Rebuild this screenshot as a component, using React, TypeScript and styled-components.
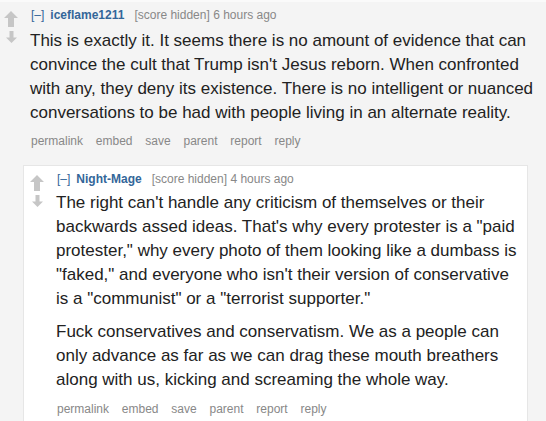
import React from "react";
import styled, { createGlobalStyle } from "styled-components";

const Global = createGlobalStyle`
  html, body { margin: 0; padding: 0; background: #f4f4f4; }
  body { font-family: "Liberation Sans", Arial, sans-serif; }
`;

const Page = styled.div`
  border-top: 2px solid #fafafa;
  min-height: 419px;
  overflow: hidden;
`;

const CommentBox = styled.div<{ $nested?: boolean }>`
  background: ${(p) => (p.$nested ? "#ffffff" : "transparent")};
  border: ${(p) => (p.$nested ? "1px solid #e6e6e6" : "none")};
  padding: ${(p) => (p.$nested ? "5px 8px 12px 2px" : "5px 6px 0 0")};
`;

const Row = styled.div`
  display: grid;
  grid-template-columns: 30px 1fr;
`;

const Arrows = styled.div`
  display: flex;
  flex-direction: column;
  padding-top: 4px;
  padding-left: 4px;
`;

const UpArrow = styled.svg`
  display: block;
  width: 14px;
  height: 16px;
`;

const DownArrow = styled.svg`
  display: block;
  width: 11px;
  height: 12px;
  margin-top: 4px;
  margin-left: 2px;
`;

const Entry = styled.div`
  min-width: 0;
`;

const Tagline = styled.div`
  font-size: 12px;
  line-height: 16px;
  color: #888888;
  display: flex;
  align-items: baseline;
  white-space: nowrap;
`;

const Expand = styled.span`
  color: #336699;
  margin-right: 6px;
  margin-left: 1px;
`;

const Author = styled.span`
  color: #336699;
  font-weight: bold;
  margin-right: 10px;
`;

const Body = styled.div<{ $top: number }>`
  margin-top: ${(p) => p.$top}px;
  font-size: 17px;
  line-height: 24px;
  color: #222222;
`;

const Para = styled.p`
  margin: 0 0 9px 0;
  &:last-child { margin-bottom: 0; }
`;

const Actions = styled.ul<{ $top: number }>`
  list-style: none;
  margin: ${(p) => p.$top}px 0 0 1px;
  padding: 0;
  display: flex;
  gap: 12.8px;
  font-size: 12px;
  line-height: 16px;
  color: #888888;
`;

const Action = styled.li`
  white-space: nowrap;
`;

const Children = styled.div`
  margin: 16px 12px 0 23px;
`;

const ARROW = "#c6c6c6";

function Votes() {
  return (
    <Arrows>
      <UpArrow viewBox="0 0 14 16">
        <path d="M7 0 L14 7 L10 7 L10 16 L4 16 L4 7 L0 7 Z" fill={ARROW} />
      </UpArrow>
      <DownArrow viewBox="0 0 11 12">
        <path d="M3.5 0 L7.5 0 L7.5 6.5 L11 6.5 L5.5 12 L0 6.5 L3.5 6.5 Z" fill={ARROW} />
      </DownArrow>
    </Arrows>
  );
}

const ACTIONS = ["permalink", "embed", "save", "parent", "report", "reply"];

function Comment(props: {
  author: string;
  age: string;
  paragraphs: string[];
  nested?: boolean;
  bodyTop: number;
  actionsTop: number;
  children?: React.ReactNode;
}) {
  return (
    <CommentBox $nested={props.nested}>
      <Row>
        <Votes />
        <Entry>
          <Tagline>
            <Expand>[–]</Expand>
            <Author>{props.author}</Author>
            <span>[score hidden] {props.age}</span>
          </Tagline>
          <Body $top={props.bodyTop}>
            {props.paragraphs.map((t, i) => (
              <Para key={i}>{t}</Para>
            ))}
          </Body>
          <Actions $top={props.actionsTop}>
            {ACTIONS.map((a) => (
              <Action key={a}>{a}</Action>
            ))}
          </Actions>
        </Entry>
      </Row>
      {props.children}
    </CommentBox>
  );
}

export default function App() {
  return (
    <Page>
      <Global />
      <Comment
        author="iceflame1211"
        age="6 hours ago"
        bodyTop={6}
        actionsTop={8}
        paragraphs={[
          "This is exactly it. It seems there is no amount of evidence that can convince the cult that Trump isn't Jesus reborn. When confronted with any, they deny its existence. There is no intelligent or nuanced conversations to be had with people living in an alternate reality.",
        ]}
      >
        <Children>
          <Comment
            nested
            author="Night-Mage"
            age="4 hours ago"
            bodyTop={4}
            actionsTop={9}
            paragraphs={[
              "The right can't handle any criticism of themselves or their backwards assed ideas. That's why every protester is a \"paid protester,\" why every photo of them looking like a dumbass is \"faked,\" and everyone who isn't their version of conservative is a \"communist\" or a \"terrorist supporter.\"",
              "Fuck conservatives and conservatism. We as a people can only advance as far as we can drag these mouth breathers along with us, kicking and screaming the whole way.",
            ]}
          />
        </Children>
      </Comment>
    </Page>
  );
}
